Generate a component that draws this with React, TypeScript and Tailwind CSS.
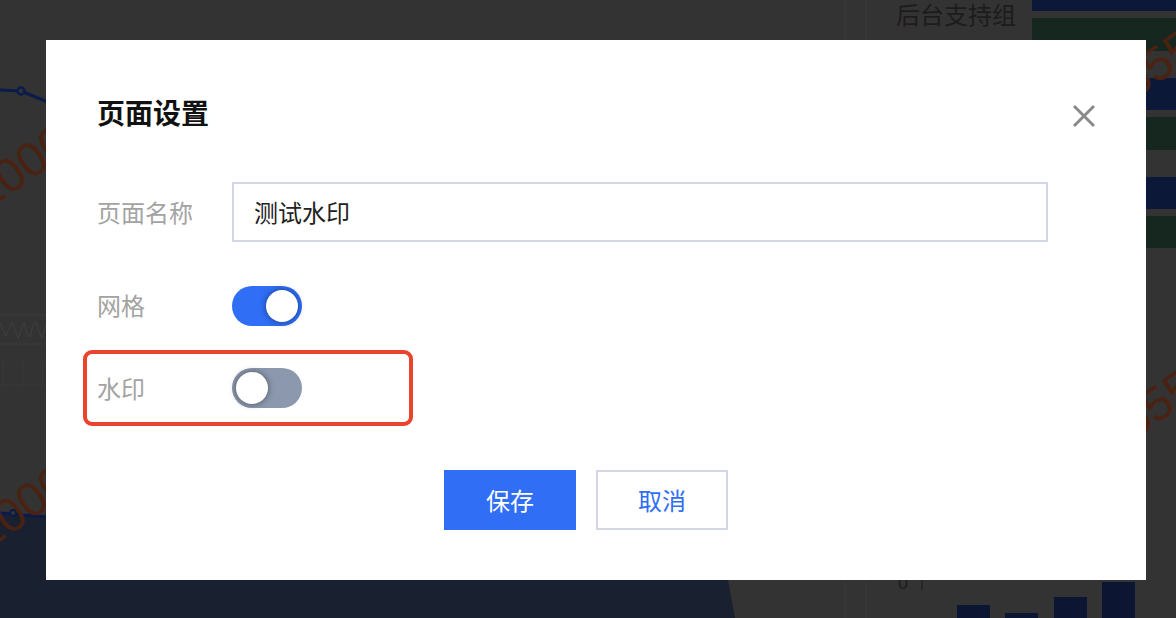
import React from "react";

function Toggle({ on }: { on: boolean }) {
  return (
    <div
      className={
        on
          ? "relative h-[40px] w-[70px] rounded-full bg-[#2f6ef5] flex items-center justify-end pr-[4px]"
          : "relative h-[40px] w-[70px] rounded-full bg-[#8c98ad] flex items-center justify-start pl-[4px]"
      }
    >
      <div className="h-[32px] w-[32px] rounded-full bg-white shadow-[0_0_7px_rgba(0,0,0,0.45)]" />
    </div>
  );
}

function Background() {
  return (
    <svg
      className="absolute inset-0"
      width={1176}
      height={618}
      viewBox="0 0 1176 618"
    >
      {/* top-left line chart */}
      <polyline points="0,90 21,91 60,107" fill="none" stroke="#0b1b4c" strokeWidth={3} />
      <circle cx={21} cy={91} r={3.5} fill="#333" stroke="#0b1b4c" strokeWidth={2.5} />
      {/* wave strip */}
      <line x1={0} y1={315} x2={60} y2={315} stroke="#3b3b3b" strokeWidth={1} />
      <line x1={0} y1={344} x2={60} y2={344} stroke="#3b3b3b" strokeWidth={1} />
      <polyline
        points="0,322 3,330 6,336 9,328 12,322 15,330 18,338 21,330 24,322 27,334 30,337 33,326 36,322 39,332 42,338 45,328 48,322"
        fill="none"
        stroke="#3f3f3f"
        strokeWidth={1}
        strokeLinejoin="round"
      />
      <line x1={0} y1={360} x2={60} y2={360} stroke="#383838" strokeWidth={1} />
      <line x1={0} y1={385} x2={60} y2={385} stroke="#383838" strokeWidth={1} />
      <line x1={3} y1={360} x2={3} y2={385} stroke="#383838" strokeWidth={1} />
      <line x1={23} y1={360} x2={23} y2={385} stroke="#383838" strokeWidth={1} />
      <line x1={43} y1={360} x2={43} y2={385} stroke="#383838" strokeWidth={1} />
      {/* bottom navy area */}
      <polygon points="0,512 60,518 725,540 728,580 735,618 0,618" fill="#19202f" />
      <polyline points="0,513 60,518" fill="none" stroke="#0c1a4a" strokeWidth={3} />
      <circle cx={13} cy={513} r={3} fill="#333" stroke="#0c1a4a" strokeWidth={2} />
      {/* faint grid lines top/bottom right */}
      <line x1={845} y1={0} x2={845} y2={40} stroke="#3a3a3a" strokeWidth={1} />
      <line x1={866} y1={0} x2={866} y2={40} stroke="#3a3a3a" strokeWidth={1} />
      <line x1={845} y1={580} x2={845} y2={618} stroke="#3a3a3a" strokeWidth={1} />
      <line x1={866} y1={580} x2={866} y2={618} stroke="#3a3a3a" strokeWidth={1} />
      {/* right bars */}
      <rect x={1032} y={0} width={144} height={11} fill="#0c1838" />
      <rect x={1032} y={18} width={144} height={33} fill="#15271e" />
      <rect x={1100} y={78} width={76} height={32} fill="#0c1838" />
      <rect x={1100} y={117} width={76} height={33} fill="#15271e" />
      <rect x={1100} y={177} width={76} height={32} fill="#0c1838" />
      <rect x={1100} y={216} width={76} height={32} fill="#15271e" />
      {/* bottom bars */}
      <rect x={957} y={605} width={33} height={13} fill="#0c1633" />
      <rect x={1005} y={613} width={33} height={5} fill="#0c1633" />
      <rect x={1054} y={597} width={33} height={21} fill="#0c1633" />
      <rect x={1102} y={582} width={33} height={36} fill="#0c1633" />
      <line x1={922} y1={578} x2={922} y2={590} stroke="#1c1c1c" strokeWidth={1} />
      <text x={898} y={589} fontSize={18} fill="#1c1c1c" fontFamily="Liberation Sans, sans-serif">
        0
      </text>
      {/* watermark numbers */}
      <g fill="#4a2211" fontFamily="Liberation Sans, sans-serif" fontSize={48}>
        <text x={74} y={150} textAnchor="end" transform="rotate(-35 74 150)">
          1000
        </text>
        <text x={74} y={490} textAnchor="end" transform="rotate(-35 74 490)">
          1000
        </text>
        <text x={1134} y={100} transform="rotate(-35 1134 100)">
          555
        </text>
        <text x={1134} y={440} transform="rotate(-35 1134 440)">
          555
        </text>
      </g>
    </svg>
  );
}

export default function App() {
  return (
    <div
      className="relative w-[1176px] h-[618px] overflow-hidden bg-[#333333]"
      style={{ fontFamily: '"Noto Sans CJK SC", "Noto Sans", sans-serif' }}
    >
      <Background />
      <div className="absolute left-[896px] top-[0px] text-[24px] leading-[28px] text-[#1c1c1c]">
        后台支持组
      </div>

      <div className="absolute left-[46px] top-[40px] w-[1100px] h-[540px] bg-white pl-[51px] pt-[56px]">
        <button className="absolute right-[50px] top-[64px] h-[24px] w-[24px]">
          <svg width={24} height={24} viewBox="0 0 24 24">
            <path d="M2 2 L22 22 M22 2 L2 22" stroke="#8a8a8a" strokeWidth={3} fill="none" />
          </svg>
        </button>

        <div className="text-[28px] leading-[32px] font-bold text-[#111]">页面设置</div>

        <div className="mt-[54px] flex items-center">
          <div className="w-[135px] text-[24px] leading-[32px] text-[#a3a3a3]">页面名称</div>
          <div className="h-[60px] w-[816px] border-2 border-[#d2d7e2] flex items-center pl-[20px] text-[24px] text-[#222]">
            测试水印
          </div>
        </div>

        <div className="mt-[44px] flex items-center">
          <div className="w-[135px] text-[24px] leading-[32px] text-[#a3a3a3] -mt-[3px]">网格</div>
          <Toggle on={true} />
        </div>

        <div className="mt-[24px] -ml-[14px] w-[330px] h-[76px] border-4 border-[#e9432b] rounded-[9px] pl-[10px] flex items-center">
          <div className="w-[135px] text-[24px] leading-[32px] text-[#a3a3a3]">水印</div>
          <Toggle on={false} />
        </div>

        <div className="mt-[44px] flex justify-center gap-[20px] pr-[71px]">
          <button className="h-[60px] w-[132px] bg-[#2f6ef5] text-white text-[24px]">保存</button>
          <button className="h-[60px] w-[132px] border-2 border-[#d2d7e2] bg-white text-[#2f6ef5] text-[24px]">
            取消
          </button>
        </div>
      </div>
    </div>
  );
}
